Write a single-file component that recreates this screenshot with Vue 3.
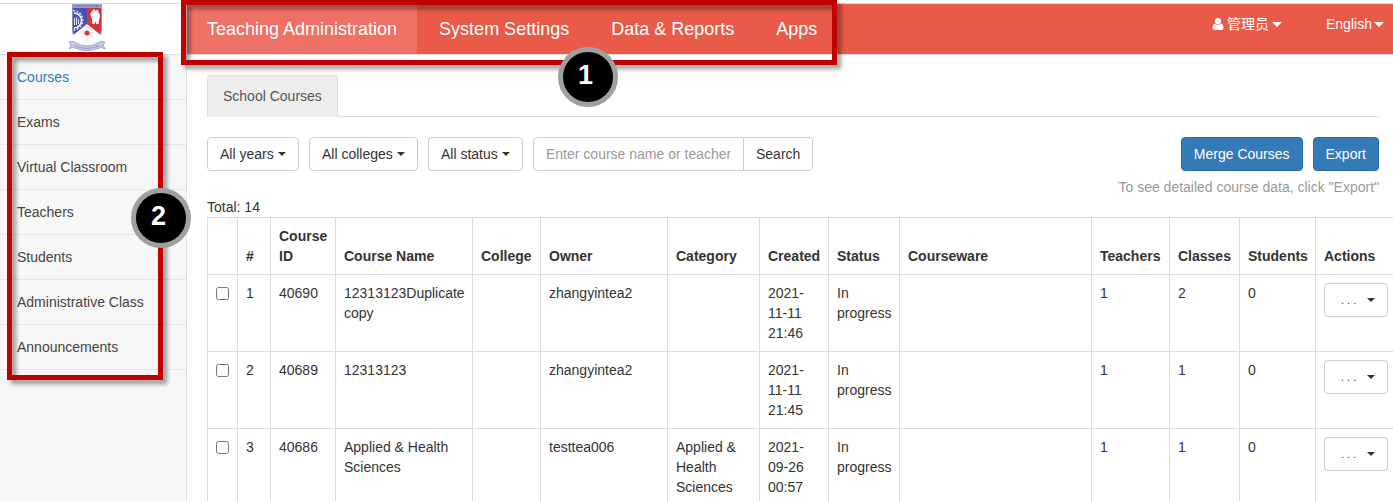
<script setup>
import { ref } from 'vue'

const tabs = ['Teaching Administration', 'System Settings', 'Data & Reports', 'Apps']
const menu = ['Courses', 'Exams', 'Virtual Classroom', 'Teachers', 'Students', 'Administrative Class', 'Announcements']
const filters = ['All years', 'All colleges', 'All status']
const keyword = ref('')

const columns = [
  { label: '', cls: 'c-check' },
  { label: '#', cls: 'c-index' },
  { label: 'Course ID', cls: 'c-id' },
  { label: 'Course Name', cls: 'c-name' },
  { label: 'College', cls: 'c-college' },
  { label: 'Owner', cls: 'c-owner' },
  { label: 'Category', cls: 'c-category' },
  { label: 'Created', cls: 'c-created' },
  { label: 'Status', cls: 'c-status' },
  { label: 'Courseware', cls: 'c-ware' },
  { label: 'Teachers', cls: 'c-teachers' },
  { label: 'Classes', cls: 'c-classes' },
  { label: 'Students', cls: 'c-students' },
  { label: 'Actions', cls: 'c-actions' },
]

const rows = [
  { id: '40690', name: '12313123Duplicate copy', owner: 'zhangyintea2', category: '', created: '2021-11-11 21:46', teachers: 1, classes: 2, students: 0 },
  { id: '40689', name: '12313123', owner: 'zhangyintea2', category: '', created: '2021-11-11 21:45', teachers: 1, classes: 1, students: 0 },
  { id: '40686', name: 'Applied & Health Sciences', owner: 'testtea006', category: 'Applied & Health Sciences', created: '2021-09-26 00:57', teachers: 1, classes: 1, students: 0 },
]
</script>

<template>
  <div class="page">
    <header class="top">
      <a class="brand" href="#" aria-label="Home">
        <svg class="crest" viewBox="0 0 38 48" aria-hidden="true">
          <path d="M4 0H34V26Q33 37 19 43Q5 37 4 26Z" fill="#f5f4fa" />
          <path d="M5 3H19V23L6 33Q4 29 4.500 25Z" fill="#4a50b4" />
          <path d="M19 3H33.500V25Q33.500 29 32 33L19 23Z" fill="#d3353b" />
          <path d="M4 0H34V4H4Z" fill="#9a9dc9" />
          <path d="M7 2H31" stroke="#62679f" stroke-dasharray="2 1" />
          <path d="M4.500 4V26Q5 36 19 42Q33 36 33.500 26V4" fill="none" stroke="#8b90c9" />
          <path d="M6 9A7 7 0 0 1 6 24" fill="none" stroke="#fff" stroke-width="1.500" />
          <path d="M5 6.500A9.500 9.500 0 0 1 5 26" fill="none" stroke="#dfe1f6" stroke-width="1.500" stroke-dasharray="2 1.500" />
          <path d="M6.500 14V21M8.500 13V21M10.500 15V20" stroke="#e8e9f8" />
          <path d="M22.500 10Q22.500 8 24 8Q24 5.500 26 5.500Q27.500 5.500 27.500 7.500Q28 5.500 29.500 6Q31 6.500 30.500 8.500Q32.500 10 31.500 14L30.500 20H28L27.500 17L26.500 20H24.500L24 15Q22.500 13 22.500 10Z" fill="#fff" />
          <path d="M19 20L34 32Q30 39 19 43Q8 39 4 32Z" fill="#fff" />
          <path d="M19 22V36M13 25L25 33M25 25L13 33M11 29H27" stroke="#f6d6d6" />
          <circle cx="19" cy="29" r="2.500" fill="#d3353b" />
          <path d="M1 38Q5 36 8 39Q19 45 30 39Q33 36 37 38L35 41L37 45Q33 42 31 44Q19 49 7 44Q5 42 1 45L3 41Z" fill="#c6c9e4" stroke="#a3a6d0" />
          <path d="M7 41.500Q19 47 31 41.500" fill="none" stroke="#7479b4" stroke-dasharray="2 1" />
        </svg>
      </a>
      <div class="bar">
        <nav class="tabs" aria-label="Main">
          <a v-for="(t, i) in tabs" :key="t" href="#" :class="{ active: i === 0 }">{{ t }}</a>
          <span class="frame frame-tabs"></span>
          <span class="badge badge-tabs">1</span>
        </nav>
        <div class="account">
          <button class="user" type="button" aria-haspopup="menu">
            <svg width="12" height="12" viewBox="0 0 11 12" aria-hidden="true">
              <path d="M5.500 0A3 3 0 0 1 8.500 3Q8.500 6.500 5.500 6.500T2.500 3A3 3 0 0 1 5.500 0ZM2.500 5.500Q5.500 8.500 8.500 5.500Q11 6 11 10Q11 12 9 12H2Q0 12 0 10Q0 6 2.500 5.500Z" fill="#fff" />
            </svg>
            <span>管理员</span>
            <span class="caret"></span>
          </button>
          <div class="pick lang">
            <select aria-label="Language"><option>English</option></select>
            <span class="caret"></span>
          </div>
        </div>
      </div>
    </header>

    <div class="body">
      <aside class="side">
        <nav class="menu" aria-label="Sections">
          <a v-for="(m, i) in menu" :key="m" href="#" :class="{ active: i === 0 }">{{ m }}</a>
          <span class="frame frame-menu"></span>
          <span class="badge badge-menu">2</span>
        </nav>
      </aside>

      <main class="main">
        <div class="subtabs"><a href="#">School Courses</a></div>

        <div class="tools">
          <div class="filters">
            <div v-for="f in filters" :key="f" class="pick filter">
              <select :aria-label="f"><option>{{ f }}</option></select>
              <span class="caret"></span>
            </div>
            <form class="search" @submit.prevent>
              <input v-model="keyword" type="text" aria-label="Course name or teacher" placeholder="Enter course name or teacher" />
              <button type="submit">Search</button>
            </form>
          </div>
          <div class="export">
            <div class="buttons">
              <button type="button">Merge Courses</button>
              <button type="button">Export</button>
            </div>
            <p>To see detailed course data, click "Export"</p>
          </div>
        </div>

        <p class="total">Total: 14</p>
        <table>
          <colgroup><col v-for="c in columns" :key="c.cls" :class="c.cls" /></colgroup>
          <thead>
            <tr><th v-for="c in columns" :key="c.cls" scope="col">{{ c.label }}</th></tr>
          </thead>
          <tbody>
            <tr v-for="(r, i) in rows" :key="r.id">
              <td><input type="checkbox" :aria-label="'Select course ' + r.id" /></td>
              <td>{{ i + 1 }}</td>
              <td>{{ r.id }}</td>
              <td>{{ r.name }}</td>
              <td></td>
              <td>{{ r.owner }}</td>
              <td>{{ r.category }}</td>
              <td>{{ r.created }}</td>
              <td>In progress</td>
              <td></td>
              <td>{{ r.teachers }}</td>
              <td>{{ r.classes }}</td>
              <td>{{ r.students }}</td>
              <td>
                <button class="more" type="button" aria-haspopup="menu" :aria-label="'Actions for course ' + r.id">
                  <span>. . .</span><span class="caret"></span>
                </button>
              </td>
            </tr>
          </tbody>
        </table>
      </main>
    </div>
  </div>
</template>

<style>
html, body { background: #fff; }
body { margin: 0; overflow: hidden; }
</style>

<style scoped>
.page, .page * { box-sizing: border-box; }
.page {
  display: flex;
  flex-direction: column;
  min-height: 100vh;
  padding-top: 3px;
  overflow: hidden;
  color: #333;
  font: 14px/20px "Liberation Sans", Arial, "Noto Sans CJK SC", sans-serif;
}
a { text-decoration: none; }
p { margin: 0; }
button, select, input { font: inherit; color: inherit; margin: 0; }
button, select { cursor: pointer; }
.caret {
  flex: none;
  border-top: 4px solid currentColor;
  border-left: 4px solid transparent;
  border-right: 4px solid transparent;
}
.account .caret { border-width: 5px 5px 0; }

.top {
  display: flex;
  border-top: 1px solid #dcdcdc;
  border-bottom: 1px solid #dcdcdc;
}
.brand {
  display: flex;
  justify-content: center;
  width: 187px;
  padding-right: 13px;
  border-right: 1px solid #e7e7e7;
}
.crest { width: 38px; height: 48px; }
.bar {
  display: flex;
  flex: 1;
  justify-content: space-between;
  background: #ea5a48;
  color: #fff;
}
.tabs { display: flex; gap: 2px; position: relative; z-index: 2; }
.tabs a {
  padding: 0 20px;
  color: #fff;
  font-size: 18px;
  line-height: 50px;
}
.tabs .active { background: #ef7064; }
.account { display: flex; align-items: flex-start; gap: 44px; padding: 10px 9px 0 0; }
.user {
  display: flex;
  align-items: center;
  gap: 3px;
  height: 20px;
  padding: 0;
  border: 0;
  background: none;
}

.pick { position: relative; display: flex; align-items: center; }
.pick select {
  appearance: none;
  height: 100%;
  border: 0;
  border-radius: 4px;
  background: transparent;
}
.pick .caret { position: absolute; right: 0; pointer-events: none; }
.pick option { color: #333; }
.lang { height: 20px; }
.lang select { padding: 0 12px 0 0; }

.body { display: flex; flex: 1; }
.side {
  flex: none;
  width: 187px;
  border-right: 1px solid #e1e1e8;
  background: #f7f7f7;
}
.menu { position: relative; z-index: 1; display: flex; flex-direction: column; }
.menu a {
  padding: 12px 17px;
  border-bottom: 1px solid #e7e7e7;
  color: #444;
}
.menu .active { color: #337ab7; }

.main { flex: 1; min-width: 0; padding: 20px 14px 0 20px; }
.subtabs { display: flex; border-bottom: 1px solid #ddd; }
.subtabs a {
  margin-bottom: -1px;
  padding: 10px 15px 11px;
  border: 1px solid #ddd;
  border-bottom: 0;
  border-radius: 4px 4px 0 0;
  background: #eee;
  color: #555;
}
.tools {
  display: flex;
  justify-content: space-between;
  padding-top: 20px;
}
.filters, .buttons { display: flex; gap: 10px; height: 34px; }
.filter { border: 1px solid #ccc; border-radius: 4px; }
.filter select { padding: 0 24px 0 12px; }
.filter .caret { right: 12px; }
.search { display: flex; }
.search input {
  width: 211px;
  padding: 0 12px;
  border: 1px solid #ccc;
  border-radius: 4px 0 0 4px;
  background: #fff;
}
.search input::placeholder { color: #999; }
.search button {
  margin-left: -1px;
  padding: 0 12px;
  border: 1px solid #ccc;
  border-radius: 0 4px 4px 0;
  background: #fff;
}
.export { display: flex; flex-direction: column; align-items: flex-end; gap: 6px; color: #999; }
.buttons button {
  padding: 0 12px;
  border: 1px solid #2e6da4;
  border-radius: 4px;
  background: #337ab7;
  color: #fff;
}

table {
  width: 100%;
  min-width: 1190px;
  border-collapse: collapse;
  table-layout: fixed;
}
th, td {
  padding: 8px;
  border: 1px solid #ddd;
  text-align: left;
  vertical-align: top;
}
th { vertical-align: bottom; }
td input { display: block; width: 13px; height: 13px; margin-top: 4px; }
.c-check { width: 30px; }
.c-index { width: 33px; }
.c-id { width: 65px; }
.c-name { width: 137px; }
.c-college { width: 68px; }
.c-owner { width: 127px; }
.c-category { width: 92px; }
.c-created { width: 69px; }
.c-status { width: 71px; }
.c-teachers { width: 78px; }
.c-classes { width: 70px; }
.c-students { width: 76px; }
.c-actions { width: 81px; }
.more {
  display: flex;
  align-items: center;
  justify-content: space-between;
  width: 64px;
  height: 34px;
  padding: 0 12px 0 16px;
  border: 1px solid #ccc;
  border-radius: 4px;
  background: #fff;
  font-size: 11px;
}

.frame {
  position: absolute;
  border: 5px solid #c00000;
  filter: drop-shadow(4px 4px 2px rgba(0, 0, 0, 0.4));
  pointer-events: none;
}
.frame-tabs { inset: -4px 0 -11px -6px; }
.frame-menu { inset: -3px 23px -10px 7px; }
.badge {
  position: absolute;
  display: flex;
  align-items: center;
  justify-content: center;
  width: 60px;
  height: 60px;
  padding: 0 5px 4px 0;
  border: 5px solid #a0a0a0;
  border-radius: 50%;
  background: #000;
  color: #fff;
  font-size: 27px;
  font-weight: bold;
  pointer-events: none;
}
.badge-tabs { left: 371px; top: 43px; }
.badge-menu { right: -5px; top: 133px; }
</style>
